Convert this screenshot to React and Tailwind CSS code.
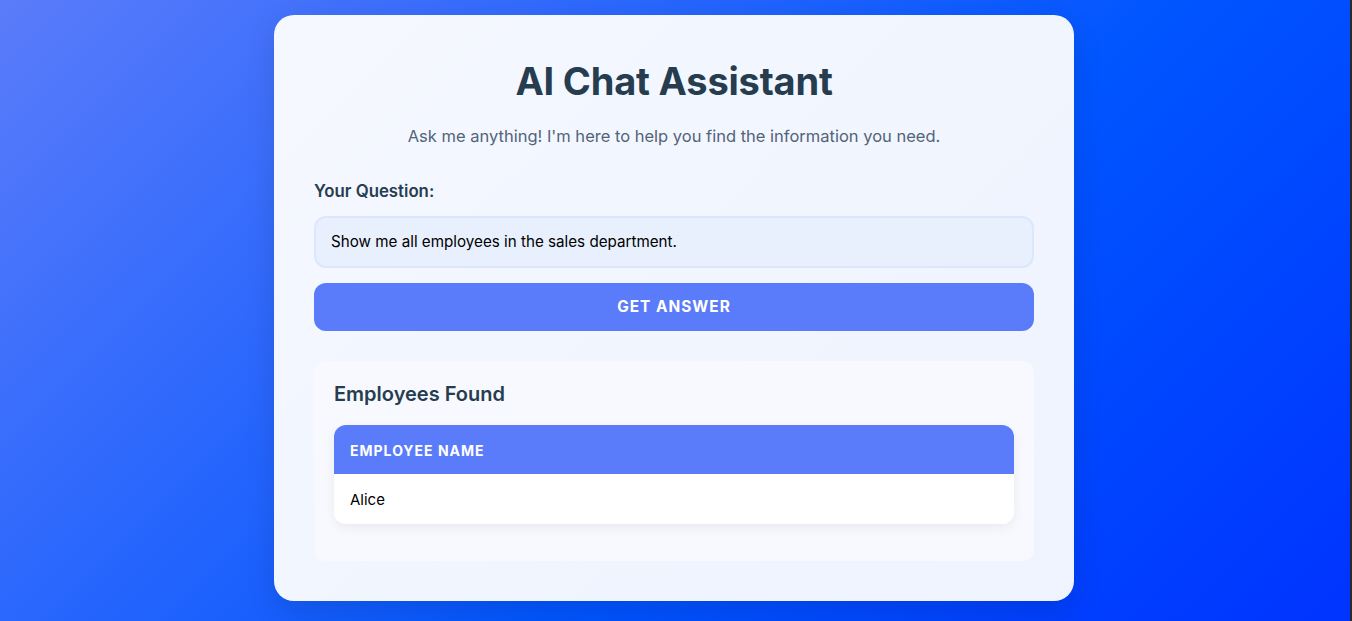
export default function App() {
  return (
    <div className="flex h-[621px] w-full overflow-hidden font-['Inter',sans-serif]">
      <div className="flex-1 h-full bg-[linear-gradient(135deg,#5b7cfa_0%,#0055ff_60%,#0033ff_100%)] flex justify-center pt-[15px] pr-[2px]">
        <div className="w-[800px] h-[586px] rounded-[20px] bg-[linear-gradient(135deg,#f5f8ff_0%,#eef3fe_100%)] shadow-[0_10px_30px_rgba(0,0,0,0.12)] px-10 pt-[43px] pb-10 flex flex-col">
          <h1 className="text-[38px] leading-[46px] font-bold text-[#263d50] text-center tracking-[-0.2px]">
            AI Chat Assistant
          </h1>
          <p className="mt-5 text-[16.5px] leading-6 text-[#526478] text-center">
            Ask me anything! I'm here to help you find the information you need.
          </p>
          <label className="mt-[31px] text-[16.8px] leading-6 font-semibold text-[#263d50]">
            Your Question:
          </label>
          <div className="mt-[13px] h-[52px] rounded-xl border-2 border-[#dce7fb] bg-[#e8f0fe] flex items-center px-[15px] text-[15.2px] text-black">
            Show me all employees in the sales department.
          </div>
          <button className="mt-[15px] h-12 rounded-xl bg-[#5b7cfa] text-white text-[15.4px] font-bold tracking-[1px] uppercase">
            Get Answer
          </button>
          <div className="mt-[30px] rounded-xl bg-[#f7f9ff] px-5 pt-5 pb-[37px]">
            <h3 className="text-[20px] leading-6 font-semibold text-[#263d50] pt-px">
              Employees Found
            </h3>
            <div className="mt-[19px] rounded-xl overflow-hidden bg-white shadow-[0_4px_12px_rgba(0,0,0,0.06)]">
              <div className="h-[49px] bg-[#5b7cfa] flex items-center px-4 pt-[2px] text-white text-[14px] font-bold tracking-[1px] uppercase">
                Employee Name
              </div>
              <div className="h-[50px] bg-white flex items-center px-4 pt-[3px] text-[15px] text-black">
                Alice
              </div>
            </div>
          </div>
        </div>
      </div>
      <div className="w-[2px] h-full bg-[#2a2a2a]" />
    </div>
  );
}
